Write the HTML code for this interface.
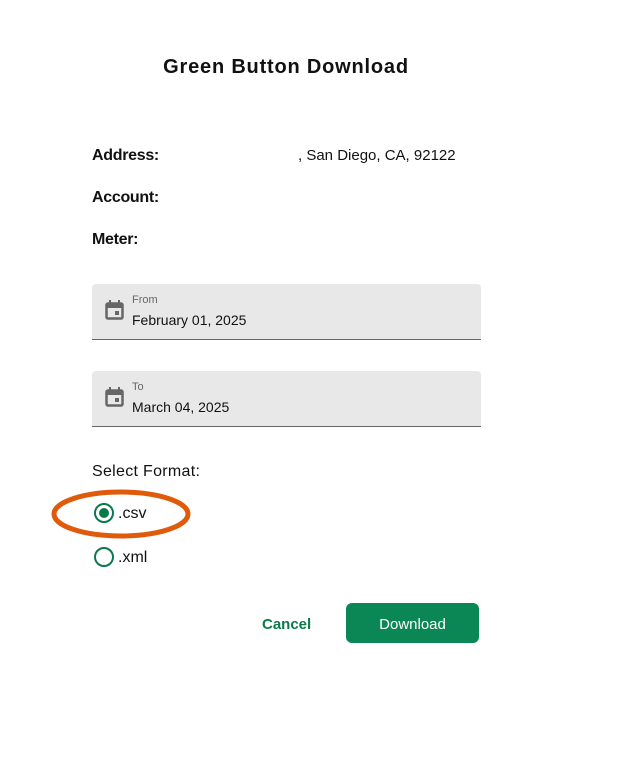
<!DOCTYPE html>
<html><head><meta charset="utf-8"><style>
body{margin:0;width:621px;height:760px;background:#fff;font-family:"Liberation Sans",sans-serif;position:relative;overflow:hidden;color:#111}
.a{position:absolute}
h1{position:absolute;left:0;width:572px;text-align:center;top:56px;margin:0;font-size:20px;font-weight:bold;color:#111;letter-spacing:0.8px}
.lbl{font-size:16px;font-weight:bold;left:92px;color:#111;letter-spacing:-0.3px}
.field{position:absolute;left:92px;width:389px;height:55px;background:#e8e8e8;border-bottom:1px solid #666;border-radius:4px 4px 0 0}
.small{position:absolute;left:40px;top:10px;font-size:11px;color:#666}
.val{position:absolute;left:40px;top:28px;font-size:14px;color:#111}
.cal{position:absolute;left:13px;top:16px}
.radio{position:absolute;left:94px;border:2px solid #0b7a4b;border-radius:50%;box-sizing:border-box;width:20px;height:20px}
</style></head><body>
<h1>Green Button Download</h1>
<div class="a lbl" style="top:147px">Address:</div>
<div class="a" style="left:298px;top:147px;font-size:15px">, San Diego, CA, 92122</div>
<div class="a lbl" style="top:189px">Account:</div>
<div class="a lbl" style="top:231px">Meter:</div>
<div class="field" style="top:284px"><svg class="cal" width="19" height="21" viewBox="0 0 19 21"><rect x="1.5" y="3.5" width="16" height="15" rx="1.5" fill="none" stroke="#666" stroke-width="2.5"/><rect x="1" y="3" width="17" height="5" fill="#666"/><rect x="4" y="0" width="2" height="4" fill="#666"/><rect x="13" y="0" width="2" height="4" fill="#666"/><rect x="10" y="11" width="4" height="4" fill="#666"/></svg><div class="small">From</div><div class="val">February 01, 2025</div></div>
<div class="field" style="top:371px"><svg class="cal" width="19" height="21" viewBox="0 0 19 21"><rect x="1.5" y="3.5" width="16" height="15" rx="1.5" fill="none" stroke="#666" stroke-width="2.5"/><rect x="1" y="3" width="17" height="5" fill="#666"/><rect x="4" y="0" width="2" height="4" fill="#666"/><rect x="13" y="0" width="2" height="4" fill="#666"/><rect x="10" y="11" width="4" height="4" fill="#666"/></svg><div class="small">To</div><div class="val">March 04, 2025</div></div>
<div class="a" style="left:92px;top:463px;font-size:16px;letter-spacing:0.3px">Select Format:</div>
<div class="radio" style="top:503px"><div style="position:absolute;left:3px;top:3px;width:10px;height:10px;border-radius:50%;background:#0b7a4b"></div></div>
<div class="a" style="left:118px;top:505px;font-size:16px">.csv</div>
<div class="radio" style="top:547px"></div>
<div class="a" style="left:118px;top:549px;font-size:16px">.xml</div>
<svg class="a" style="left:50px;top:487px" width="145" height="56"><ellipse cx="71" cy="27" rx="67" ry="22" fill="none" stroke="#e05a0c" stroke-width="5"/></svg>
<div class="a" style="left:262px;top:616px;font-size:15px;color:#0b7a4b;font-weight:bold">Cancel</div>
<div class="a" style="left:346px;top:603px;width:133px;height:40px;background:#0a8754;border-radius:6px;color:#fff;font-size:15px;text-align:center;line-height:43px">Download</div>
</body></html>
